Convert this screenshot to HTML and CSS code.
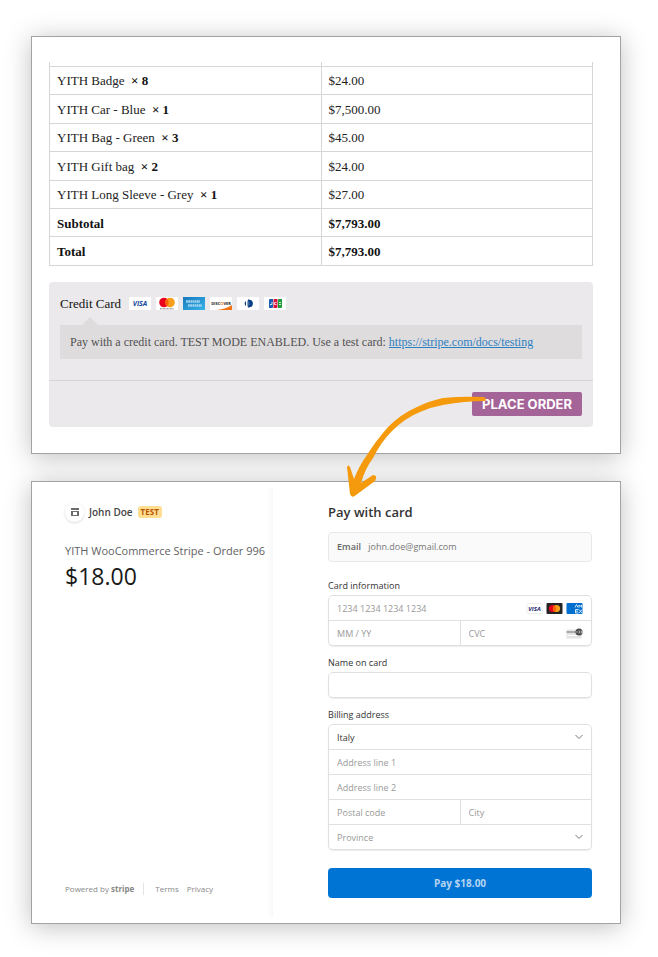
FILE: index.html
```
<!doctype html>
<html lang="en">
<head>
    <meta charset="utf-8">
    <meta name="viewport" content="width=device-width, initial-scale=1">
    <title>Stripe checkout</title>
    <link rel="stylesheet" href="styles.css">
</head>
<body>
<main class="page">

    <!-- order review -->
    <section class="panel order">
        <table class="order-table">
            <tbody>
                <tr class="cut"><td></td><td></td></tr>
                <tr><td>YITH Badge &nbsp;<b>× 8</b></td><td>$24.00</td></tr>
                <tr><td>YITH Car - Blue &nbsp;<b>× 1</b></td><td>$7,500.00</td></tr>
                <tr><td>YITH Bag - Green &nbsp;<b>× 3</b></td><td>$45.00</td></tr>
                <tr><td>YITH Gift bag &nbsp;<b>× 2</b></td><td>$24.00</td></tr>
                <tr><td>YITH Long Sleeve - Grey &nbsp;<b>× 1</b></td><td>$27.00</td></tr>
                <tr class="sum"><th scope="row">Subtotal</th><td>$7,793.00</td></tr>
                <tr class="sum"><th scope="row">Total</th><td>$7,793.00</td></tr>
            </tbody>
        </table>

        <div class="payment">
            <div class="methods">
                <div class="method">
                    <span class="method-name">Credit Card</span>
                    <svg class="brand" viewBox="0 0 22 13" role="img" aria-label="Visa"><rect width="22" height="13" rx="1" fill="#fff"/><text x="11" y="9" class="t-visa">VISA</text></svg>
                    <svg class="brand" viewBox="0 0 22 13" role="img" aria-label="Mastercard"><rect width="22" height="13" rx="1" fill="#fff"/><circle cx="8" cy="5.500" r="4.800" fill="#eb001b"/><circle cx="14" cy="5.500" r="4.800" fill="#f79e1b"/><path d="M11 1.800a5 5 0 0 1 0 7.400a5 5 0 0 1 0-7.400z" fill="#ff5f00"/><path d="M4 11.800h14" stroke="#666" stroke-width=".9" stroke-dasharray="1 .4"/></svg>
                    <svg class="brand" viewBox="0 0 22 13" role="img" aria-label="American Express"><defs><linearGradient id="amex" x2="1" y2="1"><stop stop-color="#1878be"/><stop offset="1" stop-color="#36b4e8"/></linearGradient></defs><rect width="22" height="13" fill="url(#amex)"/><path d="M3 4.500h14M5 8.500h14" stroke="#9fd3f0" stroke-width="2.600" stroke-dasharray="1.800 .4"/></svg>
                    <svg class="brand" viewBox="0 0 22 13" role="img" aria-label="Discover"><rect width="22" height="13" rx="1" fill="#fff"/><path d="M22 8v5H7q9-1 15-5z" fill="#f47216"/><text x="11" y="8" class="t-disc">DISC<tspan fill="#f47216">O</tspan>VER</text></svg>
                    <svg class="brand" viewBox="0 0 22 13" role="img" aria-label="Diners Club"><rect width="22" height="13" rx="1" fill="#fff"/><path d="M12 3a3.500 3.500 0 0 1 0 7h-1q3-3.500 0-7z" fill="#0b3f86" stroke="#0b3f86"/><path d="M9 4a3 3 0 0 0 0 5zM10.500 4a3 3 0 0 1 0 5z" fill="#0b3f86"/></svg>
                    <svg class="brand" viewBox="0 0 22 13" role="img" aria-label="JCB"><rect width="22" height="13" rx="1" fill="#fff"/><path d="M6 2h3v8q0 1-1 1H5V3q0-1 1-1z" fill="#1a5fb4"/><path d="M10.500 2h3v8q0 1-1 1h-3V3q0-1 1-1z" fill="#d8123a"/><path d="M15 2h3v8q0 1-1 1h-3V3q0-1 1-1z" fill="#1f9d3a"/><path d="M6 7.500h2V5M12.500 5.500h-2v2h2M15 5.500h2M15 7.500h2" fill="none" stroke="#fff" stroke-width=".8"/></svg>
                </div>
                <p class="method-info">Pay with a credit card. TEST MODE ENABLED. Use a test card: <a href="#">https://stripe.com/docs/testing</a></p>
            </div>
            <div class="place-order">
                <button type="button" class="btn-order">PLACE ORDER</button>
                <svg class="arrow" viewBox="0 0 144 104" aria-hidden="true">
                    <path d="M141 2Q119 1 100 3Q86 6 74 12Q58 19 45 32Q32 47 24 60Q16 71 11 84L7 72Q5 69 4 72L7 99Q9 104 13 100L32 86Q35 80 30 80L18 88Q22 74 30 63Q38 47 49 36Q62 23 77 17Q88 12 100 10Q122 6 142 6Q144 4 141 2z" fill="#f59a0c"/>
                </svg>
            </div>
        </div>
    </section>

    <!-- hosted checkout -->
    <section class="panel checkout">
        <div class="summary">
            <div class="merchant">
                <span class="avatar">
                    <svg viewBox="0 0 10 10" aria-hidden="true"><path d="M1 1h8v2H1zM1 4h8v1H1zM1 5h2v3h4V5h2v4H1z" fill="#6b6b6b"/></svg>
                </span>
                <span class="merchant-name">John Doe</span>
                <span class="tag">TEST</span>
            </div>
            <p class="order-name">YITH WooCommerce Stripe - Order 996</p>
            <p class="amount">$18.00</p>
            <footer class="foot">
                <span class="powered">Powered by <b>stripe</b></span>
                <a href="#">Terms</a>
                <a href="#">Privacy</a>
            </footer>
        </div>

        <form class="pay">
            <h1>Pay with card</h1>
            <div class="email"><span>Email</span> john.doe@gmail.com</div>

            <label class="first" for="card">Card information</label>
            <div class="group">
                <div class="cell wide">
                    <input id="card" type="text" placeholder="1234 1234 1234 1234">
                    <span class="icons">
                        <svg viewBox="0 0 16 11" role="img" aria-label="Visa"><rect x=".5" y=".5" width="15" height="10" rx="1" fill="#fff" stroke="#eee"/><text x="8" y="8" class="t-visa small">VISA</text></svg>
                        <svg viewBox="0 0 16 11" role="img" aria-label="Mastercard"><rect width="16" height="11" rx="1" fill="#252525"/><circle cx="6" cy="5.500" r="3.600" fill="#eb001b"/><circle cx="10" cy="5.500" r="3.600" fill="#f79e1b"/><path d="M8 2.500a3.600 3.600 0 0 1 0 6a3.600 3.600 0 0 1 0-6z" fill="#ff5f00"/></svg>
                        <svg viewBox="0 0 16 11" role="img" aria-label="American Express"><rect width="16" height="11" rx="1" fill="#016fd0"/><path d="M8.500 4.500l1.500-3l1.500 3M12.500 4.500V2l1.200 1.500L15 2v2.500M12 6.500H9v3.500h3M9 8.200h2.500M12.500 6.500l3 3.500M15.500 6.500l-3 3.500" fill="none" stroke="#fff" stroke-width=".8"/></svg>
                    </span>
                </div>
                <div class="cell"><input type="text" placeholder="MM / YY" aria-label="Expiration"></div>
                <div class="cell">
                    <input type="text" placeholder="CVC" aria-label="CVC">
                    <span class="icons">
                        <svg viewBox="0 0 16 11" aria-hidden="true"><path d="M0 1.500h15v9H0z" fill="#e3e3e3"/><path d="M0 3h15v2H0z" fill="#aaa"/><path d="M1 7h11v1H1z" fill="#fff"/><circle cx="12.500" cy="4" r="3.500" fill="#4a4a4a"/><path d="M10.500 3v2M12 3h1v2h-1M14 3h1v2h-1" fill="none" stroke="#ddd" stroke-width=".6"/></svg>
                    </span>
                </div>
            </div>

            <label for="name">Name on card</label>
            <div class="group">
                <div class="cell wide"><input id="name" type="text"></div>
            </div>

            <label for="country">Billing address</label>
            <div class="group">
                <div class="cell wide">
                    <select id="country"><option>Italy</option></select>
                    <svg class="chevron" viewBox="0 0 8 6" aria-hidden="true"><path d="M.5 1L4 4.500L7.500 1"/></svg>
                </div>
                <div class="cell wide"><input type="text" placeholder="Address line 1" aria-label="Address line 1"></div>
                <div class="cell wide"><input type="text" placeholder="Address line 2" aria-label="Address line 2"></div>
                <div class="cell"><input type="text" placeholder="Postal code" aria-label="Postal code"></div>
                <div class="cell"><input type="text" placeholder="City" aria-label="City"></div>
                <div class="cell wide">
                    <select class="empty" aria-label="Province"><option>Province</option></select>
                    <svg class="chevron" viewBox="0 0 8 6" aria-hidden="true"><path d="M.5 1L4 4.500L7.500 1"/></svg>
                </div>
            </div>

            <button type="button" class="btn-pay">Pay $18.00</button>
        </form>
    </section>

</main>
</body>
</html>
```
FILE: styles.css
```
*{box-sizing:border-box;}
body{margin:0; background:#fff; color:#222; font-family:"Open Sans","Noto Sans",sans-serif;}
p,h1{margin:0;}
input,select,button{font:inherit; margin:0;}

.page{display:flex; flex-direction:column; gap:27px; padding:36px 37px 33px 31px;}
.panel{background:#fff; border:1px solid #a3a3a3; box-shadow:0 3px 24px rgba(0,0,0,.25);}

/* order review */
.order{padding:25px 27px 26px 17px; font-family:"Liberation Serif",serif;}
.order-table{width:100%; height:204px; border-collapse:collapse; table-layout:fixed; font-size:13px; line-height:16px;}
.order-table td,.order-table th{height:28px; padding:2px 8px 0 7px; border:1px solid #d6d6d6; text-align:left; font-weight:normal;}
.order-table .cut td{height:4px; padding:0; border-top:0;}
.order-table b{color:#111;}
.order-table .sum th,.order-table .sum td{color:#111; font-weight:bold;}

.payment{margin-top:16px; background:#ebe9eb; border-radius:4px;}
.methods{padding:11px 11px 21px; border-bottom:1px solid #d6d4d6;}
.method{display:flex; align-items:center; gap:5px; height:21px; color:#111;}
.method-name{margin-right:3px; font-size:13px;}
.brand{width:22px; height:13px;}
.method-info{position:relative; margin-top:11px; padding:0 10px; background:#dfdcde; color:#515151; font-size:12px; line-height:34px;}
.method-info:before{content:""; position:absolute; left:22px; top:-8px; border:8px solid transparent; border-top:0; border-bottom-color:#dfdcde;}
.method-info a{color:#2b7fc0;}
.place-order{position:relative; display:flex; justify-content:flex-end; padding:11px;}
.btn-order{height:24px; padding:0 10px; border:0; border-radius:2px; background:#a46497; color:#fff; font-family:Inter,sans-serif; font-size:13px; font-weight:bold;}
.arrow{position:absolute; right:106px; top:14px; width:144px; height:104px;}

.t-visa{font:italic bold 7px "Open Sans",sans-serif; fill:#15489c; text-anchor:middle;}
.t-visa.small{font-size:6px; fill:#1a1f71;}
.t-disc{font:bold 4px "Open Sans",sans-serif; fill:#222; text-anchor:middle;}

/* hosted checkout */
.checkout{display:grid; grid-template-columns:41% minmax(0,1fr);}
.summary{display:flex; flex-direction:column; margin:6px 0; padding:14px 0 22px 33px; background:linear-gradient(to left,#f7f7f7,#fff 6px);}
.merchant{display:flex; align-items:center; gap:5px; font-size:10px; line-height:20px;}
.avatar{display:flex; align-items:center; justify-content:center; width:19px; height:19px; border-radius:50%; box-shadow:0 1px 3px rgba(0,0,0,.15);}
.avatar svg{width:10px; height:10px;}
.merchant-name{color:#444; font-weight:600;}
.tag{padding:0 3px; border-radius:3px; background:#ffde92; color:#bb5504; font-size:8px; font-weight:bold; line-height:12px;}
.order-name{margin-top:20px; color:#5f5f5f; font-size:11px; line-height:18px; white-space:nowrap;}
.amount{color:#1a1a1a; font-size:23px; line-height:32px;}
.foot{display:flex; align-items:center; gap:8px; margin-top:auto; color:#888; font-size:8px; line-height:12px;}
.foot a{color:inherit; text-decoration:none;}
.powered{margin-right:3px; padding-right:9px; border-right:1px solid #e4e4e4;}

.pay{padding:21px 28px 25px 55px; font-size:9px;}
.pay h1{font-size:13px; font-weight:600; line-height:18px; color:#333;}
.email{margin-top:11px; padding:0 8px; border:1px solid #e8e8e8; border-radius:4px; background:#fafafa; color:#777; line-height:28px;}
.email span{margin-right:5px; color:#666; font-weight:600;}
.pay label{display:block; margin-top:11px; color:#333; line-height:12px;}
.pay label.first{margin-top:18px;}
.group{display:grid; grid-template-columns:repeat(2,minmax(0,1fr)); gap:1px; margin-top:3px; border:1px solid #e0e0e0; border-radius:5px; background:#e0e0e0; box-shadow:0 1px 1px rgba(0,0,0,.08); overflow:hidden;}
.cell{position:relative; display:flex; align-items:center; height:24px; background:#fff;}
.wide{grid-column:1 / -1;}
.cell input,.cell select{flex:1; min-width:0; height:24px; padding:0 8px; border:0; background:none; color:#333; appearance:none; outline:0;}
.cell input::placeholder,.cell .empty{color:#999; opacity:1;}
.icons{display:flex; gap:3px; padding-right:8px;}
.icons svg{width:17px; height:11px;}
.chevron{position:absolute; right:8px; width:8px; height:6px; fill:none; stroke:#777; pointer-events:none;}
.btn-pay{display:block; width:100%; height:30px; margin-top:18px; border:0; border-radius:4px; background:#0074d4; color:#b5d5f2; font-size:10px; font-weight:bold;}
```
